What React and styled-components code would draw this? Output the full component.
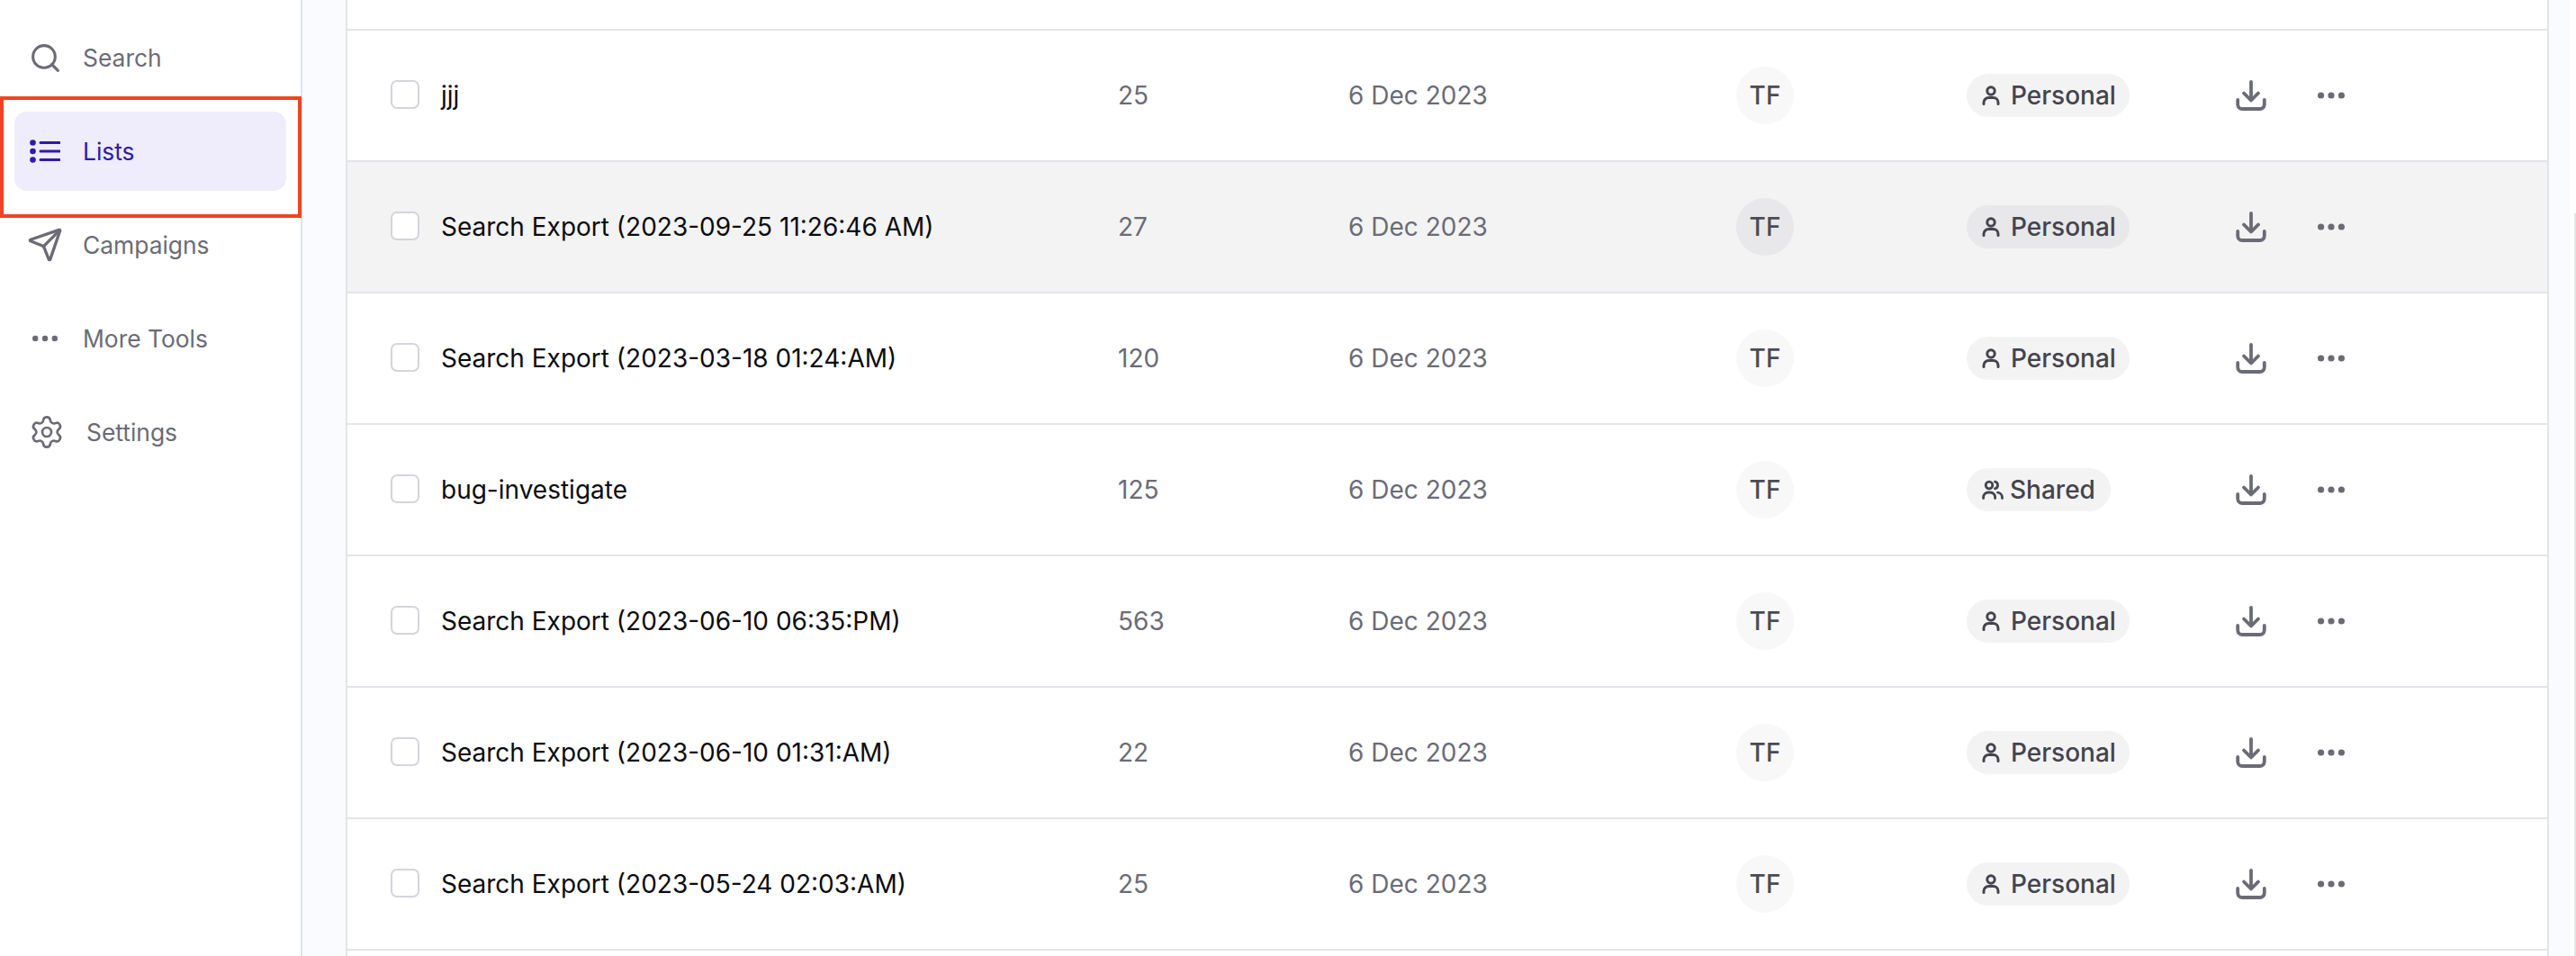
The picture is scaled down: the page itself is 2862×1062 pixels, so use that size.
import React from 'react';
import styled, { createGlobalStyle } from 'styled-components';
import { Search, Send, Settings } from 'lucide-react';

const GlobalStyle = createGlobalStyle`
  html, body {
    margin: 0;
    padding: 0;
    background: #fff;
  }
  body {
    font-family: Inter, "Liberation Sans", sans-serif;
  }
`;

const Page = styled.div`
  display: flex;
  position: relative;
  width: 2862px;
  height: 1062px;
  overflow: hidden;
  background: #fff;
`;

const Sidebar = styled.nav`
  display: flex;
  flex-direction: column;
  gap: 16px;
  box-sizing: border-box;
  width: 336px;
  flex: none;
  padding: 20px 16px 0;
  background: #fff;
  border-right: 2px solid #e2e3ea;
`;

const NavItem = styled.div`
  display: flex;
  align-items: center;
  gap: ${p => p.$gap || 25}px;
  height: 88px;
  padding-left: ${p => p.$pad || 17}px;
  border-radius: 14px;
  font-size: 26.4px;
  color: ${p => (p.$active ? '#2e1ba8' : '#6b6b76')};
  background: ${p => (p.$active ? '#efecfb' : 'transparent')};

  svg {
    flex: none;
    display: block;
  }
`;

const Highlight = styled.div`
  position: absolute;
  left: 0;
  top: 107px;
  width: 335px;
  height: 135px;
  box-sizing: border-box;
  border: 4px solid #ef4425;
  pointer-events: none;
`;

const ScrollThumb = styled.div`
  position: absolute;
  right: 0;
  top: 237px;
  bottom: 0;
  width: 2px;
  background: #e3e4e8;
`;

const Main = styled.main`
  width: 2519px;
  flex: none;
  box-sizing: border-box;
  padding: 0 23px 0 48px;
  background: #fafbff;
`;

const Table = styled.div`
  display: flex;
  flex-direction: column;
  height: 100%;
  background: #fff;
  border-left: 2px solid #e3e4e8;
  border-right: 2px solid #e3e4e8;
`;

const TopEdge = styled.div`
  flex: none;
  height: 32px;
  border-bottom: 2px solid #e3e4e8;
`;

const Row = styled.div`
  display: grid;
  flex: none;
  grid-template-columns: 808px 256px 431px 256px 299px 91px 1fr;
  align-items: center;
  box-sizing: border-box;
  height: 146px;
  padding-left: 48px;
  border-bottom: 2px solid #e3e4e8;
  background: ${p => (p.$hover ? '#f3f3f3' : '#fff')};
`;

const NameCell = styled.div`
  display: flex;
  align-items: center;
  gap: 24px;
  font-size: 28px;
  color: #0b0b0f;
  white-space: nowrap;
`;

const Checkbox = styled.span`
  flex: none;
  box-sizing: border-box;
  width: 32px;
  height: 32px;
  margin-top: -2px;
  border: 2px solid #d4d5db;
  border-radius: 7px;
  background: #fff;
`;

const MutedCell = styled.div`
  font-size: 28px;
  color: #6b6b76;
`;

const Avatar = styled.div`
  display: flex;
  align-items: center;
  justify-content: center;
  width: 64px;
  height: 64px;
  border-radius: 50%;
  font-size: 28px;
  font-weight: 500;
  color: #4b4b55;
  background: ${p => (p.$hover ? '#e8e8ea' : '#f8f8f8')};
`;

const Pill = styled.div`
  display: inline-flex;
  align-items: center;
  justify-self: start;
  gap: ${p => (p.$shared ? 7 : 12)}px;
  box-sizing: border-box;
  height: 48px;
  padding: 0 ${p => (p.$shared ? 17 : 15)}px 0 17px;
  border-radius: 24px;
  font-size: 28px;
  font-weight: 500;
  color: #44444e;
  background: ${p => (p.$hover ? '#e8e8ea' : '#f3f3f4')};

  svg {
    flex: none;
    display: block;
  }
`;

const IconCell = styled.div`
  display: flex;
  align-items: center;

  svg {
    display: block;
  }
`;

const ListIcon = () => (
  <svg width="34" height="26" viewBox="0 0 34 26" fill="none">
    <circle cx="3.5" cy="3.5" r="3.3" fill="currentColor" />
    <circle cx="3.5" cy="13" r="3.3" fill="currentColor" />
    <circle cx="3.5" cy="22.5" r="3.3" fill="currentColor" />
    <path d="M12 3.5h21M12 13h21M12 22.5h21" stroke="currentColor" strokeWidth="3" strokeLinecap="round" />
  </svg>
);

const Dots = ({ width = 30, color = '#6b6b76', r = 3.6 }) => (
  <svg width={width} height="8" viewBox={`0 0 ${width} 8`}>
    <circle cx={r} cy="4" r={r} fill={color} />
    <circle cx={width / 2} cy="4" r={r} fill={color} />
    <circle cx={width - r} cy="4" r={r} fill={color} />
  </svg>
);

const DownloadIcon = () => (
  <svg width="34" height="34" viewBox="0 0 34 34" fill="none" stroke="#6b6b76" strokeWidth="3.8" strokeLinecap="round" strokeLinejoin="round">
    <path d="M17 2v20M9 14.5 17 22.5l8-8" />
    <path d="M2.2 22v5a5 5 0 0 0 5 5h19.6a5 5 0 0 0 5-5V22" />
  </svg>
);

const PersonIcon = () => (
  <svg width="20" height="22" viewBox="0 0 20 22" fill="none" stroke="#44444e" strokeWidth="3" strokeLinecap="round">
    <circle cx="10" cy="6" r="4.2" />
    <path d="M2 20.5v-1.5a5.5 5.5 0 0 1 5.5-5.5h5a5.5 5.5 0 0 1 5.5 5.5v1.5" />
  </svg>
);

const PeopleIcon = () => (
  <svg width="24" height="22" viewBox="0 0 24 22" fill="none" stroke="#44444e" strokeWidth="2.8" strokeLinecap="round">
    <circle cx="8" cy="6" r="3.8" />
    <path d="M1.6 20.5v-1a5.5 5.5 0 0 1 5.5-5.5h2a5.5 5.5 0 0 1 5.5 5.5v1" />
    <path d="M14.5 2.2a3.9 3.9 0 0 1 0 7.6M17.5 14.2a5.5 5.5 0 0 1 5 5.3v1" />
  </svg>
);

const navItems = [
  { label: 'Search', icon: <Search size={37} strokeWidth={2} />, pad: 16, gap: 23 },
  { label: 'Lists', icon: <ListIcon />, active: true },
  { label: 'Campaigns', icon: <Send size={40} strokeWidth={2} />, pad: 14, gap: 22 },
  { label: 'More Tools', icon: <Dots width={28} r={3.2} />, pad: 20, gap: 28 },
  { label: 'Settings', icon: <Settings size={40} strokeWidth={1.6} />, pad: 16, gap: 24 },
];

const rows = [
  { name: 'jjj', count: 25 },
  { name: 'Search Export (2023-09-25 11:26:46 AM)', count: 27, hover: true },
  { name: 'Search Export (2023-03-18 01:24:AM)', count: 120 },
  { name: 'bug-investigate', count: 125, shared: true },
  { name: 'Search Export (2023-06-10 06:35:PM)', count: 563 },
  { name: 'Search Export (2023-06-10 01:31:AM)', count: 22 },
  { name: 'Search Export (2023-05-24 02:03:AM)', count: 25 },
];

export default function App() {
  return (
    <Page>
      <GlobalStyle />
      <Sidebar>
        {navItems.map(item => (
          <NavItem key={item.label} $active={item.active} $pad={item.pad} $gap={item.gap}>
            {item.icon}
            {item.label}
          </NavItem>
        ))}
      </Sidebar>
      <Highlight />
      <Main>
        <Table>
          <TopEdge />
          {rows.map(row => (
            <Row key={row.name} $hover={row.hover}>
              <NameCell>
                <Checkbox />
                {row.name}
              </NameCell>
              <MutedCell>{row.count}</MutedCell>
              <MutedCell>6 Dec 2023</MutedCell>
              <Avatar $hover={row.hover}>TF</Avatar>
              <Pill $hover={row.hover} $shared={row.shared}>
                {row.shared ? <PeopleIcon /> : <PersonIcon />}
                {row.shared ? 'Shared' : 'Personal'}
              </Pill>
              <IconCell><DownloadIcon /></IconCell>
              <IconCell><Dots /></IconCell>
            </Row>
          ))}
        </Table>
      </Main>
      <ScrollThumb />
    </Page>
  );
}
